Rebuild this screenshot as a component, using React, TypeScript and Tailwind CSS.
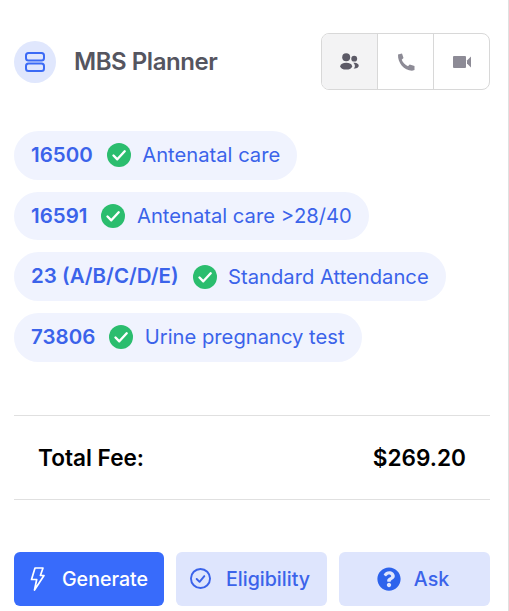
import { FaQuestionCircle } from "react-icons/fa";

const codes = [
  { code: "16500", name: "Antenatal care" },
  { code: "16591", name: "Antenatal care >28/40" },
  { code: "23 (A/B/C/D/E)", name: "Standard Attendance" },
  { code: "73806", name: "Urine pregnancy test" },
];

function GreenCheck() {
  return (
    <svg width="24" height="24" viewBox="0 0 24 24" className="shrink-0">
      <circle cx="12" cy="12" r="12" fill="#2bbd6e" />
      <path d="M6.5 12.5l3.8 3.8 7.4-8" fill="none" stroke="#fff" strokeWidth="2.4" strokeLinecap="round" strokeLinejoin="round" />
    </svg>
  );
}

export default function App() {
  return (
    <div className="w-[509px] h-[611px] bg-white border-r border-[#e0e0e0] overflow-hidden font-['Inter',sans-serif] pl-[14px] pr-[18px] pt-[33px]">
      {/* Header */}
      <div className="flex items-center justify-between h-[57px]">
        <div className="flex items-center gap-[18px]">
          <div className="w-[42px] h-[42px] rounded-full bg-[#e0e7fd] flex items-center justify-center">
            <svg width="20" height="20" viewBox="0 0 20 20" fill="none" stroke="#3b6af5" strokeWidth="2">
              <rect x="1" y="1" width="18" height="7.5" rx="2.5" />
              <rect x="1" y="11.5" width="18" height="7.5" rx="2.5" />
            </svg>
          </div>
          <span className="text-[24px] font-semibold tracking-[-0.45px] text-[#55555f]">MBS Planner</span>
        </div>
        <div className="flex h-[57px] w-[169px] border border-[#d8d8d8] rounded-lg overflow-hidden">
          <div className="flex-1 flex items-center justify-center bg-[#f3f3f4] border-r border-[#d8d8d8]">
            <svg width="19" height="17" viewBox="0 0 20 18" fill="#5c5a66">
              <circle cx="6.5" cy="4.5" r="4.2" />
              <circle cx="15" cy="6" r="3.1" />
              <ellipse cx="6.5" cy="14" rx="6.3" ry="3.6" />
              <path d="M14 10.4h1.5c2.4 0 4.3 1.5 4.3 3.2 0 1.6-1.9 2.9-4.3 2.9h-1.2c.9-.8 1.4-1.7 1.4-2.8 0-1.2-.6-2.4-1.7-3.3z" />
            </svg>
          </div>
          <div className="flex-1 flex items-center justify-center border-r border-[#d8d8d8]">
            <svg width="18" height="18" viewBox="0 0 18 18" fill="#8d8b96">
              <path d="M1 1.5 5 .5 6.5 5 4.7 6.8C5.8 9.5 8 11.8 11 13.2l1.7-1.7L17.5 13v4l-2.5.7C7 17.5.6 10 1 1.5z" />
            </svg>
          </div>
          <div className="flex-1 flex items-center justify-center">
            <svg width="18" height="12" viewBox="0 0 18 12" fill="#8d8b96">
              <path d="M0 1a1 1 0 0 1 1-1h11a1 1 0 0 1 1 1v10a1 1 0 0 1-1 1H1a1 1 0 0 1-1-1z" />
              <path d="M14 4.5 18 .5v11l-4-4z" />
            </svg>
          </div>
        </div>
      </div>

      {/* Item codes */}
      <div className="flex flex-col items-start gap-[12px] mt-[41px]">
        {codes.map((c) => (
          <div key={c.code} className="flex items-center h-[48.7px] rounded-full bg-[#f0f3fe] pl-[17px] pr-[17px] text-[20.2px] text-[#3b63ea]">
            <span className="font-semibold text-[20.5px]">{c.code}</span>
            <span className="ml-[14px] mr-[11.5px]"><GreenCheck /></span>
            <span>{c.name}</span>
          </div>
        ))}
      </div>

      {/* Total */}
      <div className="flex items-center justify-between h-[85px] mt-[53px] pt-[1px] px-[24px] border-y border-[#e0e0e0] text-[22.6px] font-semibold text-black">
        <span>Total Fee:</span>
        <span>$269.20</span>
      </div>

      {/* Actions */}
      <div className="grid grid-cols-[150px_151px_151px] gap-[12px] mt-[52px]">
        <button className="h-[54px] rounded-md bg-[#386bfb] text-white text-[19.6px] font-medium leading-[56px] flex items-center justify-center gap-[17px]">
          <svg width="15" height="24" viewBox="0 0 15 24" fill="none" stroke="#fff" strokeWidth="1.7" strokeLinejoin="round">
            <path d="M5 1h8l-2.6 7.5H14L4.5 23l2.2-10.5H1.5z" />
          </svg>
          <span className="pt-[1px]">Generate</span>
        </button>
        <button className="h-[54px] rounded-md bg-[#dee5fd] text-[#3b63ea] text-[19.6px] font-medium flex items-center justify-center gap-[15px] pr-[3px]">
          <svg width="21" height="21" viewBox="0 0 22 22" fill="none" stroke="#3b63ea" strokeWidth="2" strokeLinecap="round" strokeLinejoin="round">
            <circle cx="11" cy="11" r="10" />
            <path d="M7 11.5l3 3 5-6" />
          </svg>
          <span className="pt-[1px]">Eligibility</span>
        </button>
        <button className="h-[54px] rounded-md bg-[#dee5fd] text-[#3b63ea] text-[19.6px] font-medium flex items-center justify-center gap-[13px] pr-[3px]">
          <FaQuestionCircle size={24} color="#2d63ec" />
          <span className="pt-[1px]">Ask</span>
        </button>
      </div>
    </div>
  );
}
